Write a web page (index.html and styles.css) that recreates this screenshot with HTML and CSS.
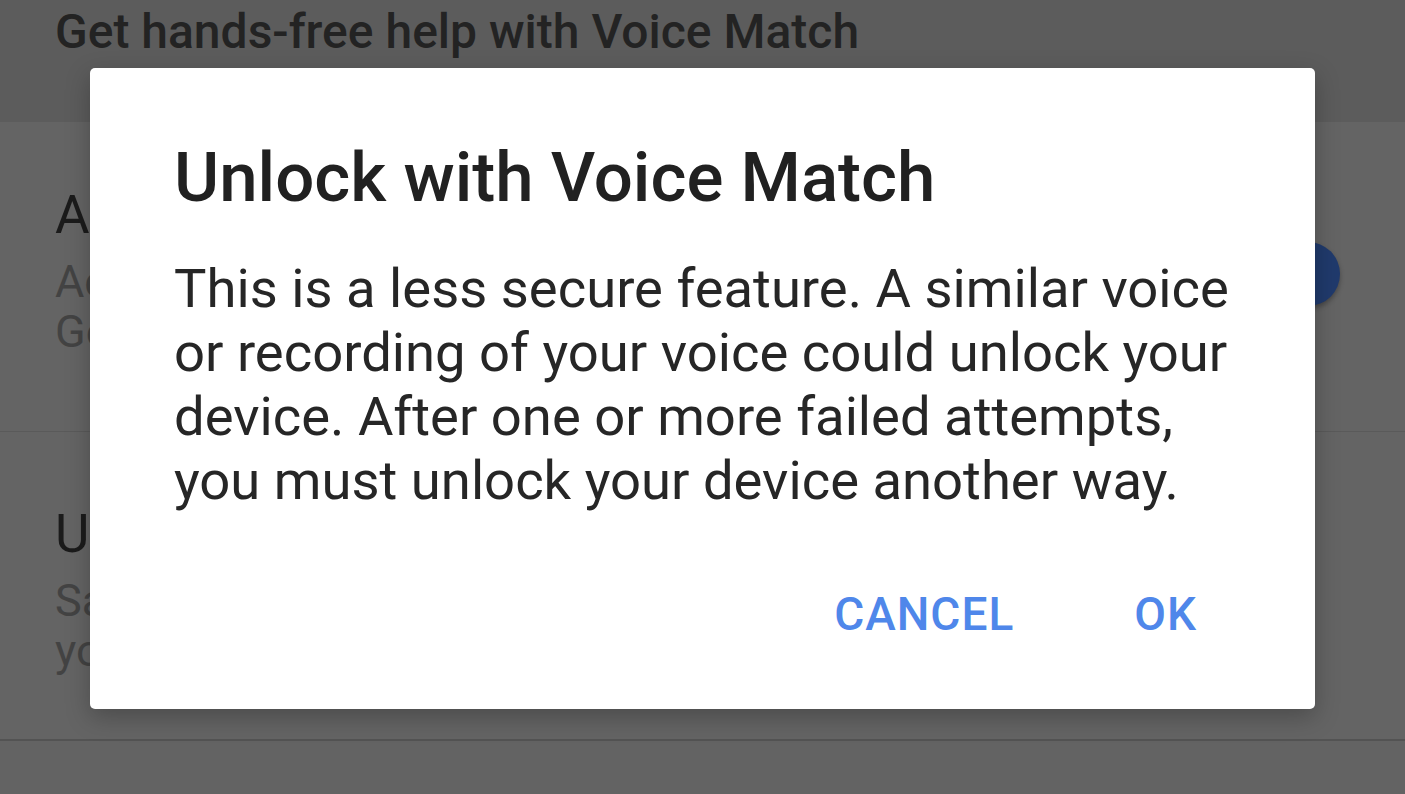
FILE: index.html
```html
<!DOCTYPE html>
<html lang="en">
<head>
<meta charset="utf-8">
<title>Unlock with Voice Match</title>
<link rel="stylesheet" href="styles.css">
</head>
<body>
<div class="page">
  <header class="band">
    <p class="band-text">Get hands-free help with Voice Match</p>
  </header>
  <section class="item item-first">
    <div class="item-body">
      <p class="item-title">Access with Voice Match</p>
      <p class="item-sub">Access your Assistant with “Ok Google” on</p>
      <p class="item-sub">Google apps and other screens</p>
    </div>
    <span class="switch"><span class="thumb"></span></span>
  </section>
  <section class="item item-second">
    <div class="item-body">
      <p class="item-title">Unlock with Voice Match</p>
      <p class="item-sub">Say “Ok Google” to unlock</p>
      <p class="item-sub">your device when it is locked</p>
    </div>
  </section>
  <div class="rest"></div>
</div>

<div class="dialog" role="dialog" aria-labelledby="dlg-title">
  <h1 class="dialog-title" id="dlg-title">Unlock with Voice Match</h1>
  <p class="dialog-text">This is a less secure feature. A similar voice or recording of your voice could unlock your device. After one or more failed attempts, you must unlock your device another way.</p>
  <div class="dialog-actions">
    <button class="btn">CANCEL</button>
    <button class="btn">OK</button>
  </div>
</div>
</body>
</html>
```

FILE: styles.css
```css
* { box-sizing: border-box; }
html, body { margin: 0; padding: 0; }
body {
  width: 1405px;
  height: 794px;
  overflow: hidden;
  background: #636363;
  font-family: Roboto, "Liberation Sans", sans-serif;
}
p { margin: 0; }

.page {
  display: flex;
  flex-direction: column;
  height: 794px;
}

.band {
  height: 122px;
  background: #5c5c5c;
  padding: 0 0 0 55px;
}
.band-text {
  font-size: 48px;
  font-weight: 500;
  line-height: 64px;
  color: #232323;
  white-space: nowrap;
}

.item {
  display: flex;
  align-items: center;
  padding-left: 55px;
  background: #646464;
}
.item-first {
  height: 310px;
  border-bottom: 1px solid #5a5a5a;
  padding-right: 65px;
}
.item-second {
  height: 309px;
  border-bottom: 2px solid #535353;
}
.item-body {
  flex: 1;
}
.item-title {
  font-size: 53px;
  line-height: 60px;
  color: #1b1b1b;
  white-space: nowrap;
  margin-bottom: 12px;
}
.item-sub {
  font-size: 45px;
  line-height: 50px;
  color: #434343;
  white-space: nowrap;
}
.item-first .item-body { padding-bottom: 12px; }
.item-second .item-body { padding-top: 8px; }

.switch {
  position: relative;
  width: 64px;
  height: 64px;
  margin-top: -6px;
}
.thumb {
  display: block;
  width: 64px;
  height: 64px;
  border-radius: 50%;
  background: #203a6c;
  box-shadow: 0 3px 5px rgba(0,0,0,0.3);
}

.rest { flex: 1; background: #636363; }

.dialog {
  position: absolute;
  left: 90px;
  top: 68px;
  width: 1225px;
  height: 641px;
  background: #ffffff;
  border-radius: 5px;
  padding: 70px 70px 0 84px;
  box-shadow: 0 8px 24px rgba(0,0,0,0.25);
}
.dialog-title {
  margin: 0;
  font-size: 69px;
  font-weight: 500;
  line-height: 80px;
  color: #212121;
  white-space: nowrap;
}
.dialog-text {
  margin-top: 39px;
  font-size: 54.4px;
  line-height: 64px;
  color: #262626;
}
.dialog-actions {
  display: flex;
  justify-content: flex-end;
  gap: 120px;
  margin-top: 78px;
  padding-right: 48px;
}
.btn {
  border: 0;
  background: none;
  padding: 0;
  font-family: Roboto, "Liberation Sans", sans-serif;
  font-size: 46px;
  font-weight: 500;
  line-height: 46px;
  letter-spacing: 1px;
  color: #4f87ea;
  cursor: pointer;
}
```
